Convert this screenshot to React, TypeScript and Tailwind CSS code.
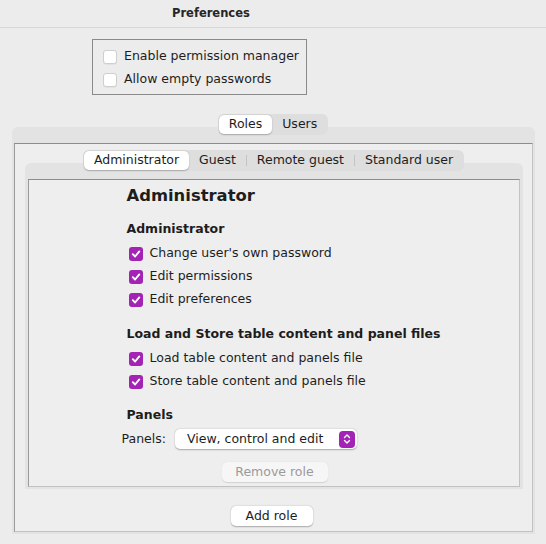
import React from 'react';

const font = { fontFamily: '"DejaVu Sans", "Liberation Sans", sans-serif' };

function Box({ checked = false }: { checked?: boolean }) {
    if (checked) {
        return (
            <span className="flex h-[14px] w-[14px] shrink-0 items-center justify-center rounded-[3px] bg-[#a223b4]">
                <svg width="10" height="10" viewBox="0 0 10 10">
                    <path d="M1.8 5.2 L4.1 7.5 L8.3 2.4" fill="none" stroke="#fff" strokeWidth="1.9" strokeLinecap="round" strokeLinejoin="round" />
                </svg>
            </span>
        );
    }
    return <span className="h-[14px] w-[14px] shrink-0 rounded-[3px] border border-[#cfcfcf] bg-white shadow-[0_0.5px_0.5px_rgba(0,0,0,0.08)]" />;
}

function Check({ label, checked = false }: { label: string; checked?: boolean }) {
    return (
        <div className="flex h-[23px] items-center gap-[7px] whitespace-nowrap text-[12.5px] text-[#1d1d1d]">
            <Box checked={checked} />
            <span>{label}</span>
        </div>
    );
}

function Segmented({ items, active }: { items: string[]; active: number }) {
    return (
        <div className="relative z-10 flex h-[21px] items-center rounded-[6px] bg-[#dedede] p-[1px] text-[12.5px] text-[#1d1d1d]">
            {items.map((it, i) => (
                <React.Fragment key={it}>
                    {i > 0 && i !== active && i - 1 !== active && <span className="h-[11px] w-px bg-[#c4c4c4]" />}
                    <span
                        className={
                            i === active
                                ? 'flex h-[19px] items-center rounded-[5px] bg-white px-[10px] shadow-[0_0.5px_1.5px_rgba(0,0,0,0.25)]'
                                : 'flex h-[19px] items-center px-[10px]'
                        }
                    >
                        {it}
                    </span>
                </React.Fragment>
            ))}
        </div>
    );
}

export default function App() {
    return (
        <div className="h-[544px] w-[546px] overflow-hidden bg-[#ececec] antialiased" style={font}>
            {/* Title bar */}
            <div className="flex h-[28px] items-center border-b border-[#d6d6d6] pl-[172px] text-[11.5px] font-bold text-[#262626]">
                Preferences
            </div>

            {/* Global options */}
            <div className="ml-[92px] mt-[11px] w-[215px] border border-[#8a8a8a] pb-[3px] pl-[10px] pt-[5px]">
                <Check label="Enable permission manager" />
                <Check label="Allow empty passwords" />
            </div>

            {/* Roles / Users */}
            <div className="mt-[19px] flex flex-col items-center">
                <Segmented items={['Roles', 'Users']} active={0} />
                <div className="-mt-[8px] ml-[12px] mr-[11px] w-[523px] self-start rounded-t-[6px] bg-[#e3e3e3] px-[2px] pb-[2px] pt-[16px]">
                    <div className="flex h-[389px] flex-col items-center border border-b-[#c2c2c2] border-l-[#9a9a9a] border-r-[#c2c2c2] border-t-[#8c8c8c] bg-[#eeeeee] pt-[6px]">
                        <Segmented items={['Administrator', 'Guest', 'Remote guest', 'Standard user']} active={0} />
                        <div className="-mt-[8px] w-[498px] rounded-t-[6px] bg-[#e3e3e3] px-[3px] pb-[2px] pt-[16px]">
                            <div className="h-[308px] border border-b-[#c2c2c2] border-l-[#9a9a9a] border-r-[#c2c2c2] border-t-[#8c8c8c] bg-[#eeeeee] pl-[98px] pt-[6px] text-[#1d1d1d]">
                                <div className="h-[20px] text-[16.4px] font-bold leading-[20px]">Administrator</div>
                                <div className="mt-[15px] h-[16px] text-[12.5px] font-bold leading-[16px]">Administrator</div>
                                <div className="mt-[5px] pl-[2px]">
                                    <Check label="Change user's own password" checked />
                                    <Check label="Edit permissions" checked />
                                    <Check label="Edit preferences" checked />
                                </div>
                                <div className="mt-[15px] h-[16px] text-[12.5px] font-bold leading-[16px]">
                                    Load and Store table content and panel files
                                </div>
                                <div className="mt-[5px] pl-[2px]">
                                    <Check label="Load table content and panels file" checked />
                                    <Check label="Store table content and panels file" checked />
                                </div>
                                <div className="mt-[14px] h-[16px] text-[12.5px] font-bold leading-[16px]">Panels</div>
                                <div className="-ml-[5px] mt-[6px] flex items-center gap-[9px] text-[12.5px]">
                                    <span>Panels:</span>
                                    <div className="flex h-[20px] w-[182px] items-center justify-between rounded-[5px] bg-white pl-[12px] pr-[2px] shadow-[0_0.5px_1.5px_rgba(0,0,0,0.3)]">
                                        <span>View, control and edit</span>
                                        <span className="flex h-[17px] w-[16px] items-center justify-center rounded-[4px] bg-[#a223b4]">
                                            <svg width="8" height="12" viewBox="0 0 8 12">
                                                <path d="M1.5 4.5 L4 2 L6.5 4.5 M1.5 7.5 L4 10 L6.5 7.5" fill="none" stroke="#fff" strokeWidth="1.4" strokeLinecap="round" strokeLinejoin="round" />
                                            </svg>
                                        </span>
                                    </div>
                                </div>
                                <div className="-ml-[98px] mt-[13px] flex justify-center pl-[2px]">
                                    <span className="flex h-[20px] w-[106px] items-center justify-center rounded-[5px] bg-[#f6f6f6] text-[12.5px] text-[#9a9a9a] shadow-[0_0.5px_1px_rgba(0,0,0,0.12)]">
                                        Remove role
                                    </span>
                                </div>
                            </div>
                        </div>
                        <div className="mt-[17px] flex justify-center pr-[4px]">
                            <span className="flex h-[20px] w-[82px] items-center justify-center rounded-[5px] bg-white text-[12.5px] text-[#1d1d1d] shadow-[0_0.5px_1.5px_rgba(0,0,0,0.3)]">
                                Add role
                            </span>
                        </div>
                    </div>
                </div>
            </div>
        </div>
    );
}
